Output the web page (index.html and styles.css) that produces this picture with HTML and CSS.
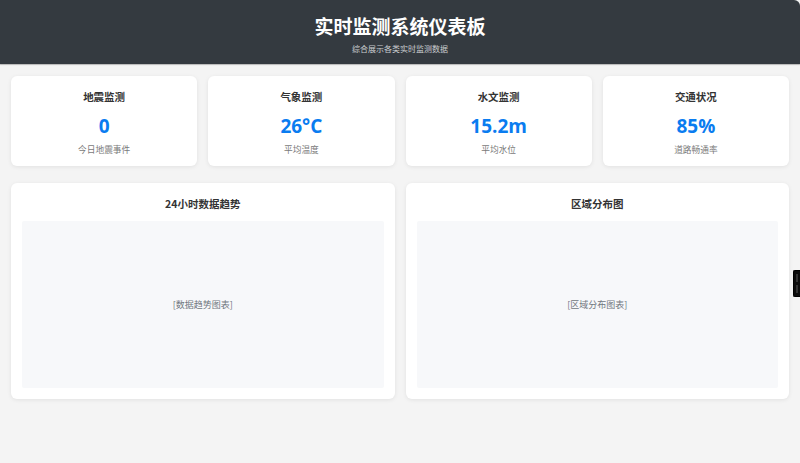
FILE: index.html
```html
<!DOCTYPE html>
<html lang="zh-CN">
<head>
<meta charset="utf-8">
<title>实时监测系统仪表板</title>
<link rel="stylesheet" href="styles.css">
</head>
<body>
<header class="header">
  <h1 class="header-title">实时监测系统仪表板</h1>
  <p class="header-sub">综合展示各类实时监测数据</p>
</header>
<main class="main">
  <section class="stats">
    <div class="card stat">
      <h3 class="stat-title">地震监测</h3>
      <div class="stat-value">0</div>
      <div class="stat-label">今日地震事件</div>
    </div>
    <div class="card stat">
      <h3 class="stat-title">气象监测</h3>
      <div class="stat-value">26°C</div>
      <div class="stat-label">平均温度</div>
    </div>
    <div class="card stat">
      <h3 class="stat-title">水文监测</h3>
      <div class="stat-value">15.2m</div>
      <div class="stat-label">平均水位</div>
    </div>
    <div class="card stat">
      <h3 class="stat-title">交通状况</h3>
      <div class="stat-value">85%</div>
      <div class="stat-label">道路畅通率</div>
    </div>
  </section>
  <section class="charts">
    <div class="card chart">
      <h3 class="chart-title">24小时数据趋势</h3>
      <div class="chart-body">[数据趋势图表]</div>
    </div>
    <div class="card chart">
      <h3 class="chart-title">区域分布图</h3>
      <div class="chart-body">[区域分布图表]</div>
    </div>
  </section>
</main>
<div class="edge-tab"><span class="edge-tab-line"></span><span class="edge-tab-line"></span></div>
</body>
</html>
```

FILE: styles.css
```css
* { box-sizing: border-box; }
html, body {
  margin: 0;
  padding: 0;
  background: #f4f4f4;
  font-family: "Open Sans", "Noto Sans CJK SC", sans-serif;
  color: #333;
}
body { min-height: 463px; position: relative; overflow: hidden; }

.header {
  background: #343a40;
  color: #fff;
  text-align: center;
  height: 64px;
  padding-top: 13px;
  border-top-right-radius: 6px;
  box-shadow: 0 1px 1px rgba(0,0,0,0.25);
}
.header-title {
  margin: 0;
  font-family: "Noto Sans CJK SC", sans-serif;
  font-size: 19px;
  line-height: 26px;
  font-weight: 700;
}
.header-sub {
  margin: 4px 0 0;
  font-family: "Noto Sans CJK SC", sans-serif;
  font-size: 8px;
  line-height: 12px;
  color: #c9cccf;
}

.main {
  padding: 12px 11px 11px;
}
.card {
  background: #fff;
  border-radius: 6px;
  box-shadow: 0 1px 4px rgba(0,0,0,0.08);
}
.stats {
  display: grid;
  grid-template-columns: repeat(4, 1fr);
  gap: 11px;
}
.stat {
  height: 90px;
  text-align: center;
  padding-top: 13px;
}
.stat-title, .chart-title {
  margin: 0;
  font-family: "Noto Sans CJK SC", sans-serif;
  font-size: 10.5px;
  line-height: 15px;
  font-weight: 700;
  color: #333;
}
.stat-value {
  margin-top: 10px;
  font-size: 19px;
  line-height: 24px;
  font-weight: 700;
  color: #0a7cf0;
}
.stat-label {
  margin-top: 6px;
  font-family: "Noto Sans CJK SC", sans-serif;
  font-size: 8.7px;
  line-height: 12px;
  color: #7a7a7a;
}

.charts {
  margin-top: 17px;
  display: grid;
  grid-template-columns: 1fr 1fr;
  gap: 11px;
}
.chart {
  height: 216px;
  padding: 13px 11px 11px;
  text-align: center;
}
.chart-body {
  margin-top: 10px;
  height: 167px;
  background: #f7f8fa;
  border-radius: 2px;
  display: flex;
  align-items: center;
  justify-content: center;
  font-family: "Noto Sans CJK SC", sans-serif;
  font-size: 9px;
  color: #707780;
}

.edge-tab {
  position: absolute;
  right: 0;
  top: 270px;
  width: 7px;
  height: 27px;
  background: #0c0c0c;
  border: 1px solid #000;
  border-right: none;
  border-radius: 2px 0 0 2px;
  display: flex;
  flex-direction: column;
  justify-content: center;
  gap: 3px;
  padding-left: 2px;
}
.edge-tab-line {
  display: block;
  width: 2px;
  height: 8px;
  background: #333;
}
```
